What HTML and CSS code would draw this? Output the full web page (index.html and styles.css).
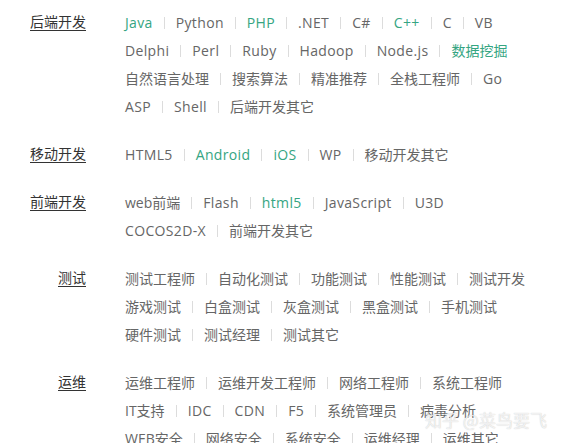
FILE: index.html
```html
<!DOCTYPE html>
<html lang="zh-CN">
<head>
<meta charset="utf-8">
<title>职位分类</title>
<link rel="stylesheet" href="styles.css">
</head>
<body>
<div class="list">
  <section class="group">
    <a class="label">后端开发</a>
    <div class="items">
      <div class="row"><span class="item en hot">Java</span><span class="item en">Python</span><span class="item en hot">PHP</span><span class="item en">.NET</span><span class="item en">C#</span><span class="item en hot">C++</span><span class="item en">C</span><span class="item en">VB</span></div>
      <div class="row"><span class="item en">Delphi</span><span class="item en">Perl</span><span class="item en">Ruby</span><span class="item en">Hadoop</span><span class="item en">Node.js</span><span class="item hot">数据挖掘</span></div>
      <div class="row"><span class="item">自然语言处理</span><span class="item">搜索算法</span><span class="item">精准推荐</span><span class="item">全栈工程师</span><span class="item en">Go</span></div>
      <div class="row"><span class="item en">ASP</span><span class="item en">Shell</span><span class="item">后端开发其它</span></div>
    </div>
  </section>
  <section class="group">
    <a class="label">移动开发</a>
    <div class="items">
      <div class="row"><span class="item en">HTML5</span><span class="item en hot">Android</span><span class="item en hot">iOS</span><span class="item en">WP</span><span class="item">移动开发其它</span></div>
    </div>
  </section>
  <section class="group">
    <a class="label">前端开发</a>
    <div class="items">
      <div class="row"><span class="item">web前端</span><span class="item en">Flash</span><span class="item en hot">html5</span><span class="item en">JavaScript</span><span class="item en">U3D</span></div>
      <div class="row"><span class="item en">COCOS2D-X</span><span class="item">前端开发其它</span></div>
    </div>
  </section>
  <section class="group">
    <a class="label">测试</a>
    <div class="items">
      <div class="row"><span class="item">测试工程师</span><span class="item">自动化测试</span><span class="item">功能测试</span><span class="item">性能测试</span><span class="item">测试开发</span></div>
      <div class="row"><span class="item">游戏测试</span><span class="item">白盒测试</span><span class="item">灰盒测试</span><span class="item">黑盒测试</span><span class="item">手机测试</span></div>
      <div class="row"><span class="item">硬件测试</span><span class="item">测试经理</span><span class="item">测试其它</span></div>
    </div>
  </section>
  <section class="group">
    <a class="label">运维</a>
    <div class="items">
      <div class="row"><span class="item">运维工程师</span><span class="item">运维开发工程师</span><span class="item">网络工程师</span><span class="item">系统工程师</span></div>
      <div class="row"><span class="item">IT支持</span><span class="item en">IDC</span><span class="item en">CDN</span><span class="item en">F5</span><span class="item">系统管理员</span><span class="item">病毒分析</span></div>
      <div class="row"><span class="item">WEB安全</span><span class="item">网络安全</span><span class="item">系统安全</span><span class="item">运维经理</span><span class="item">运维其它</span></div>
    </div>
  </section>
</div>
<div class="watermark">知乎 @菜鸟要飞</div>
</body>
</html>
```

FILE: styles.css
```css
html, body {
  margin: 0;
  padding: 0;
  background: #ffffff;
  overflow: hidden;
}
body {
  padding: 8px 8px 0 8px;
  font-family: "Open Sans", "Noto Sans CJK SC", sans-serif;
  font-size: 14px;
  color: #666666;
  height: 443px;
  box-sizing: border-box;
}
.list {
  display: flex;
  flex-direction: column;
  gap: 20px;
}
.group {
  display: grid;
  grid-template-columns: 78px 1fr;
  column-gap: 39px;
  align-items: start;
}
.label {
  justify-self: end;
  line-height: 28px;
  color: #333333;
  text-decoration: underline;
  text-underline-offset: 3px;
  white-space: nowrap;
}
.items {
  display: flex;
  flex-direction: column;
}
.row {
  display: flex;
  align-items: center;
  height: 28px;
  white-space: nowrap;
}
.item {
  display: flex;
  align-items: center;
}
.en {
  letter-spacing: 0.35px;
}
.item + .item::before {
  content: "";
  display: block;
  width: 1px;
  height: 12px;
  background: #dcdcdc;
  margin: 1px 11px 0 11px;
}
.hot {
  color: #35a582;
}
.watermark {
  position: absolute;
  left: 425px;
  top: 407px;
  font-family: "Noto Sans CJK SC", sans-serif;
  font-size: 17px;
  color: rgba(255, 255, 255, 0.75);
  text-shadow: 0 0 1px rgba(0, 0, 0, 0.25);
  white-space: nowrap;
}
```
